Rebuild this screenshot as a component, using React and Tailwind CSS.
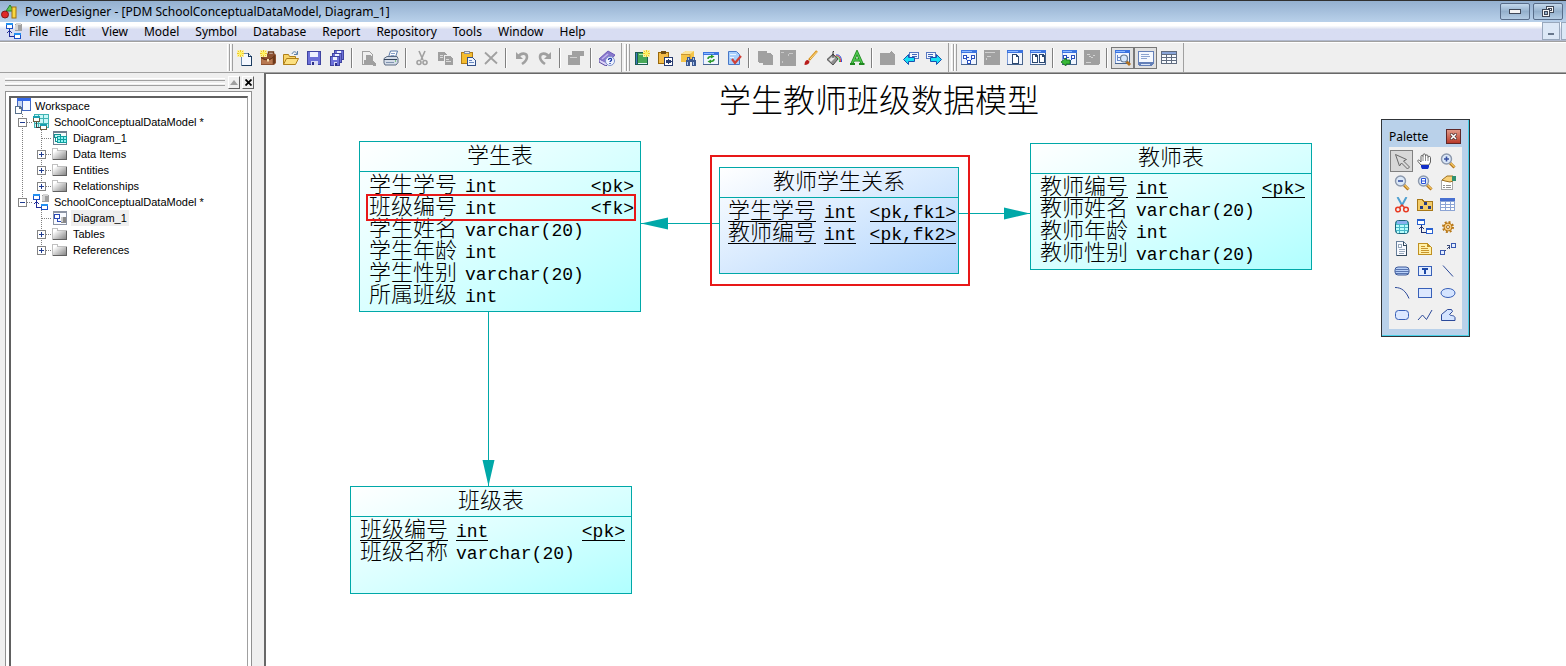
import React from 'react';
import clsx from 'clsx';

const NAVY = '#2c4a9a';
const GRAY = '#a0a0a0';
const TEAL = '#00a8a8';

const Icon = ({ children, size = 16, smooth }) => (
  <svg
    width={size}
    height={size}
    viewBox="0 0 16 16"
    fill="none"
    shapeRendering={smooth ? 'auto' : 'crispEdges'}
    aria-hidden="true"
  >
    {children}
  </svg>
);

/* ---------- shared drawings ---------- */

const Spark = ({ x = 0, y = 0 }) => (
  <g transform={`translate(${x} ${y})`}>
    <path d="M0 0h7v7H0z" fill="#fbf0a0" />
    <path d="M3 0h1v7H3zM0 3h7v1H0zM1 1h1v1H1zM5 1h1v1H5zM1 5h1v1H1zM5 5h1v1H5z" fill="#f0c828" />
    <path d="M2 2h3v3H2z" fill="#fff45c" />
  </g>
);

const Floppy = ({ x = 1, y = 1, s = 13 }) => (
  <g transform={`translate(${x} ${y})`}>
    <rect x="0" y="0" width={s} height={s} fill="#4044a0" />
    <rect x="1" y="1" width={s - 2} height={s - 2} fill="#6c70d8" />
    <rect x="3" y="1" width={s - 6} height={s > 11 ? 5 : 3} fill="#eef2ff" />
    <rect x="4" y={s - 4} width={s - 7} height="4" fill="#d8dcf4" />
    <rect x="5" y={s - 3} width="2" height="3" fill="#2c2f88" />
  </g>
);

const Window = ({ x = 1, y = 1, w = 15, h = 14 }) => (
  <g>
    <rect x={x} y={y} width={w} height={h} fill="#48648c" />
    <rect x={x} y={y} width={w - 1} height={h - 1} fill="#7c9cd8" />
    <rect x={x + 1} y={y + 3} width={w - 2} height={h - 4} fill="#f0f5ff" />
    <rect x={x} y={y} width={w} height="3" fill="#3c74e0" />
    <rect x={x + 1} y={y + 1} width={w - 6} height="1" fill="#8cb8ff" />
  </g>
);

const Lens = ({ children }) => (
  <g shapeRendering="auto">
    <path d="M10 10l4.500 4.500" stroke="#b07018" strokeWidth="3" />
    <path d="M10.500 10l4 4" stroke="#f4c860" strokeWidth="1.200" />
    <circle cx="6.500" cy="6" r="5" fill="#dbe8f8" stroke="#8c98ac" strokeWidth="1.400" />
    {children}
  </g>
);

const PhysicalModel = () => (
  <g>
    <path d="M9 1h7v7H9z" fill="#a0a0a0" />
    <path d="M10 0h5v2h-5zM9 2h3v5H9z" fill="#d4d4d4" />
    <path d="M0 0h7v6H0z" fill="#1c50c8" />
    <path d="M0 0h7v2H0z" fill="#2490f0" />
    <path d="M1 2h5v3H1z" fill="#fff" />
    <path d="M8 10h7v6H8z" fill="#1c50c8" />
    <path d="M8 10h7v2H8z" fill="#2490f0" />
    <path d="M9 12h5v3H9z" fill="#fff" />
    <path d="M3 6h1v7h4v1H3zM2 8h3v1H2zM1 9h1v1H1zM5 9h1v1H5z" fill="#202c98" />
  </g>
);

const Flow = () => (
  <g>
    <path d="M2 5h4v4H2zM10 5h4v4h-4zM6 10h4v4H6z" fill="#2850c0" />
    <path d="M3 6h2v2H3zM11 6h2v2h-2zM7 11h2v2H7z" fill="#fff" />
    <path d="M5 9h1v1H5zM10 9h1v1h-1zM6 7h2v1H6z" fill="#2850c0" />
  </g>
);

const Arrow = ({ flip }) => (
  <g transform={flip ? 'translate(16 0) scale(-1 1)' : undefined}>
    <path d="M6 2h10v7H6z" fill="#5878c0" />
    <path d="M7 3h8v5H7z" fill="#f4f8ff" />
    <path d="M9 4h5v1H9zM9 6h5v1H9z" fill="#4468b8" />
    <path d="M.5 9.500l5-5v3h6v4h-6v3z" fill="#18e0f4" stroke="#1850b0" shapeRendering="auto" />
  </g>
);

/* ---------- toolbar icons ---------- */

const icons = {
  new: (
    <g>
      <path d="M4.500 3.500h7l3 3v9h-10z" fill="#f4f8ff" stroke="#6c88a8" />
      <path d="M14.500 6v9.500H5" stroke="#1c3c60" />
      <path d="M11.500 3v3.500h3" stroke="#1c3c60" />
      <Spark />
    </g>
  ),
  project: (
    <g shapeRendering="auto">
      <path d="M8.500 4V2h5v2" stroke="#6c3818" strokeWidth="1.400" />
      <path d="M1 5l2-1.500h12L16 5v8l-2 2H1z" fill="#8c5030" />
      <path d="M1.500 8c4 3 8 3 11 0v6h-11z" fill="#b87850" />
      <path d="M1 7.500c4 3 8 3 12 0" stroke="#5c2c10" />
      <path d="M13 6l2-1v8l-2 1z" fill="#6c3818" />
      <path d="M7 9h2v2.500H7z" fill="#f8e0b0" />
      <Spark />
    </g>
  ),
  open: (
    <g shapeRendering="auto">
      <path d="M.5 14.500V4.500h5l1 2h6v3" fill="#f8d468" stroke="#b08018" />
      <path d="M.5 14.500l3-6h12l-3 6z" fill="#fce080" stroke="#b08018" />
      <path d="M9 4c1-3 4-3 5 0M14.500 1v3.500H11" stroke="#5c80a8" />
    </g>
  ),
  save: <Floppy x={1} y={1} s={14} />,
  saveAll: (
    <g>
      <Floppy x={5} y={0} s={10} />
      <Floppy x={3} y={3} s={10} />
      <Floppy x={1} y={6} s={10} />
    </g>
  ),
  preview: (
    <g fill={GRAY}>
      <path d="M2.500 1.500h7l3 3v10h-10z" stroke={GRAY} fill="none" />
      <path d="M6 5h5l2 3v3l3 3v2h-3l-2-2H4v-4h2z" />
    </g>
  ),
  print: (
    <g shapeRendering="auto">
      <path d="M5.500 7l2-6h7l-2 6z" fill="#fff" stroke="#5878a8" />
      <path d="M8 3.500h4M7.500 5.500h4" stroke="#88a0c8" />
      <path d="M1 8.500l3-2h10l1 2v4l-2 2.500H2l-1-2z" fill="#d4dce8" stroke="#5c6c84" />
      <path d="M1 9.500h13" stroke="#34445c" />
      <path d="M3 12.500h8" stroke="#8094b0" />
      <path d="M12 11h1" stroke="#30b030" />
    </g>
  ),
  cut: (
    <g stroke={GRAY} strokeWidth="1.600" shapeRendering="auto">
      <path d="M5 1l4 9M11 1L7 10" />
      <circle cx="5" cy="12.500" r="2" />
      <circle cx="11" cy="12.500" r="2" />
    </g>
  ),
  copy: (
    <g fill={GRAY}>
      <path d="M1 2h6l3 2v7H1z" />
      <path d="M7 5h6l3 3v7H7z" stroke="#efefef" strokeWidth="1" />
      <path d="M9 9h3v1H9zM9 11h5v1H9zM3 5h3v1H3zM3 7h3v1H3z" fill="#dcdcdc" />
    </g>
  ),
  paste: (
    <g>
      <path d="M1.500 2.500h11v11h-11z" fill="#f4bc30" stroke="#b07c18" />
      <path d="M4 1h6v3H4z" fill="#8890a0" />
      <path d="M5 2h4v1H5z" fill="#e8ecf4" />
      <path d="M7.500 7.500h5l3 3v5h-8z" fill="#eef4ff" stroke="#345088" />
      <path d="M9 10.500h3M9 12.500h5" stroke="#6888c0" />
    </g>
  ),
  remove: (
    <path d="M2 2.500l12 11M14 2L2 14" stroke={GRAY} strokeWidth="1.800" shapeRendering="auto" />
  ),
  undo: (
    <g shapeRendering="auto">
      <path d="M4 7c3-5 9-4 9 0 0 3-2 5-5 7" stroke={GRAY} strokeWidth="2.600" />
      <path d="M2 2v7h7z" fill={GRAY} />
    </g>
  ),
  redo: (
    <g shapeRendering="auto">
      <path d="M12 7C9 2 3 3 3 7c0 3 2 5 5 7" stroke={GRAY} strokeWidth="2.600" />
      <path d="M14 2v7H7z" fill={GRAY} />
    </g>
  ),
  props: (
    <g fill={GRAY}>
      <path d="M4 1h12v5h-4v9H0V5h4z" />
      <path d="M2 7h7v1H2z" fill="#d0d0d0" />
    </g>
  ),
  help: (
    <g shapeRendering="auto">
      <path d="M0 9l9-8 7 4-8 9z" fill="#8878cc" stroke="#6c5cb8" />
      <path d="M0 9.500V12l7 4 2-2" fill="#dcd4f8" stroke="#5848a0" />
      <path d="M3 9l6-5" stroke="#c0b4f0" strokeWidth="1.500" />
      <circle cx="11" cy="11" r="4.500" fill="#f0f4ff" stroke="#7c90cc" />
      <path d="M9.500 10c0-2.500 3.500-2 3 0-.3 1-1.500 1-1.500 2M11 13v1" stroke="#1838a8" strokeWidth="1.300" />
    </g>
  ),
  newModel: (
    <g>
      <path d="M1 2h13v13H1z" fill="#1c5c50" />
      <path d="M4 3h9v10H4z" fill="#48a858" />
      <path d="M2 3h1v11H2z" fill="#3c78c0" />
      <path d="M5 4h6v1H5z" fill="#b0e4b0" />
      <path d="M4 13h9v1H4z" fill="#e4f4f8" />
      <Spark x={9} />
    </g>
  ),
  pasteShortcut: (
    <g>
      <path d="M1.500 2.500h10v11h-10z" fill="#f4bc48" stroke="#98680c" />
      <path d="M4 1h5v3H4z" fill="#704c10" />
      <path d="M7 7h9v9H7z" fill="#283c70" />
      <path d="M8 8h7v7H8z" fill="#fff" />
      <path d="M9 13v-3h2V8.500l4 3-4 3V13z" fill="#283c70" />
    </g>
  ),
  find: (
    <g>
      <path d="M1 4l5-3h8v7l-4 4H1z" fill="#f4c448" shapeRendering="auto" />
      <path d="M1 4l5-3h8l-4 3z" fill="#fce498" shapeRendering="auto" />
      <path d="M1 4.500h9V12" stroke="#c89430" shapeRendering="auto" />
      <path d="M7 7h3v2h2V7h3v2l1 2v5h-4v-4h-2v4H6v-5l1-2z" fill="#3c5890" />
      <path d="M7 12h1v3H7zM13 12h1v3h-1zM8 8h1v2H8zM13 8h1v2h-1z" fill="#a8c8f4" />
    </g>
  ),
  refresh: (
    <g>
      <Window x={0} y={2} w={16} h={13} />
      <g shapeRendering="auto">
        <path d="M5 9c0-2 1.500-2.500 4-2.500M11 9c0 2-1.500 2.500-4 2.500" stroke="#2c9c2c" strokeWidth="1.600" />
        <path d="M8 4.500l3.500 2-3.500 2zM8 9.500l-3.500 2 3.500 2z" fill="#2c9c2c" />
      </g>
    </g>
  ),
  check: (
    <g shapeRendering="auto">
      <path d="M2.500 1.500h8l3 3v10h-11z" fill="#a8d0fc" stroke="#4878c8" />
      <path d="M4 4.500h6M4 7.500h4" stroke="#e8f4ff" />
      <path d="M6 9l3 4 6-7" stroke="#d04038" strokeWidth="2.200" />
    </g>
  ),
  shapesA: <path d="M1 1h9v2h3l3 3v8l-1 1H6v-2H2l-1-1z" fill={GRAY} />,
  shapesB: (
    <g>
      <path d="M0 0h16v16H0z" fill={GRAY} />
      <path d="M1 2h3v1H1zM9 3h4v1H9zM2 11h1v2H2zM8 4h1v2H8z" fill="#c8c8c8" />
    </g>
  ),
  brush: (
    <g shapeRendering="auto">
      <path d="M6 10L14 1" stroke="#d89018" strokeWidth="2.400" />
      <path d="M7 9l7-7.500" stroke="#fce090" />
      <path d="M1.500 15c0-3 1-5 3.500-5l1.500 1.500c0 2-2 3.500-5 3.500z" fill="#b81c1c" />
    </g>
  ),
  fill: (
    <g shapeRendering="auto">
      <path d="M1 9.500L7 4l5 5-5 6z" fill="#909090" stroke="#505050" />
      <path d="M3 9.500L7 6l2 2-4 4z" fill="#e8e8e8" />
      <path d="M7 8V1.500h1" stroke="#303030" />
      <path d="M10 5c3-.5 5.500 1 5.500 7" stroke="#2848d8" />
      <path d="M9.500 6c3-.5 5 1 5 6" stroke="#e03020" />
      <path d="M10 7c2-.5 3.500 1 3.500 5" stroke="#20b040" />
    </g>
  ),
  font: (
    <g shapeRendering="auto">
      <path d="M3 13.500L8 2.500l5 11M4.500 10h6" stroke="#208820" strokeWidth="3" />
      <path d="M3 13.500L8 2.500l5 11M4.500 10h6" stroke="#50c850" strokeWidth="1.400" />
      <path d="M1 14h5M10 14h5.500" stroke="#208820" strokeWidth="2" />
    </g>
  ),
  grayFolder: <path d="M0 3h9l2-2 4 3v11H0z" fill={GRAY} />,
  back: <Arrow />,
  forward: <Arrow flip />,
  diagram: (
    <g>
      <Window x={0} y={0} w={16} h={15} />
      <Flow />
    </g>
  ),
  grayWin: (
    <g>
      <path d="M0 0h16v15H0z" fill={GRAY} />
      <path d="M1 2h10v1H1zM3 6h4v1H3zM2 8h1v2H2z" fill="#d0d0d0" />
    </g>
  ),
  page: (
    <g>
      <Window x={0} y={0} w={16} h={15} />
      <path d="M5 4h4l3 2v8H5z" fill="#2c4870" />
      <path d="M6 5h3v2h2v6H6z" fill="#fff" />
    </g>
  ),
  pages: (
    <g>
      <Window x={0} y={0} w={16} h={15} />
      <path d="M2 4h4l2 2v7H2zM9 4h4l2 2v7H9z" fill="#2c4870" />
      <path d="M3 5h2v2h2v5H3zM10 5h2v2h2v5h-4z" fill="#fff" />
    </g>
  ),
  importDiagram: (
    <g>
      <Window x={1} y={0} h={15} />
      <Flow />
      <path d="M0 12l5-4v2h4v4H5v2z" fill="#38b838" stroke="#187018" strokeWidth=".8" shapeRendering="auto" />
    </g>
  ),
  grayExport: (
    <g>
      <path d="M0 0h16v14l-2 1H0z" fill={GRAY} />
      <path d="M3 4h3v1H3zM5 6h2v1H5zM9 5h2v1H9zM7 7h2v1H7zM2 12h5v1H2z" fill="#d4d4d4" />
    </g>
  ),
  browser: (
    <g>
      <Window x={0} y={0} w={15} h={14} />
      <path d="M2 5h1v6H2zM3 7h2v1H3zM3 10h2v1H3z" fill="#6888c8" />
      <g shapeRendering="auto">
        <path d="M11 11l4 4" stroke="#b07020" strokeWidth="2.800" />
        <circle cx="9" cy="8.500" r="3.500" fill="#d8e8fc" stroke="#687c94" strokeWidth="1.200" />
      </g>
    </g>
  ),
  output: (
    <g>
      <path d="M0 1h16v12l-3 3H1l-1-1z" fill="#6480b8" />
      <path d="M1 2h14v10H1z" fill="#f4f8ff" />
      <path d="M3 4h8v1H3zM3 6h9v1H3zM3 8h6v1H3z" fill="#8ca4d0" />
      <path d="M3 14h9v1H3z" fill="#d8e4f8" />
    </g>
  ),
  list: (
    <g>
      <path d="M0 1h16v13H0z" fill="#606c80" />
      <path d="M1 2h14v2H1z" fill="#88a4d8" />
      <path d="M1 5h4v2H1zM6 5h4v2H6zM11 5h4v2h-4zM1 8h4v2H1zM6 8h4v2H6zM11 8h4v2h-4zM1 11h4v2H1zM6 11h4v2H6zM11 11h4v2h-4z" fill="#f8fbff" />
    </g>
  ),
};

/* ---------- palette icons ---------- */

const paletteTools = [
  ['Pointer', <path d="M1.500 1.500l11 5-3 1.500 6 6-2 2-6-6-2 3z" fill="#d8d8d8" stroke="#686868" shapeRendering="auto" />],
  ['Grabber', (
    <g shapeRendering="auto">
      <path d="M4 12L1 8.500C.2 7.300 1.500 6.500 2.500 7.500L4 9V3.500c0-1.500 2-1.500 2 0V2c0-1.500 2.500-1.500 2.500 0v1c0-1.500 2.500-1.500 2.500 0v1.500c0-1.500 2.500-1.500 2.500 0V9L12 12z" fill="#fff" stroke="#606060" />
      <path d="M6 3.500V8M8.500 3v5M11 4.500V8" stroke="#808080" strokeWidth=".9" />
      <path d="M4 12h8v2l-1 2H5l-1-2z" fill="#1430c8" />
    </g>
  )],
  ['Zoom In', <Lens><path d="M4 6h5M6.500 3.500v5" stroke="#3850a0" strokeWidth="1.600" /></Lens>],
  ['Zoom Out', <Lens><path d="M4 6h5" stroke="#3850a0" strokeWidth="1.600" /></Lens>],
  ['Open Diagram', <Lens><path d="M4.500 3.500h4v5h-4zM4.500 6h4" fill="#fff" stroke="#2850d8" /></Lens>],
  ['Properties', (
    <g>
      <path d="M1.500 5.500h11v9h-11z" fill="#fff" stroke="#a8a8a8" />
      <path d="M3 10h2v1H3zM6 10h5v1H6zM3 12h2v1H3zM6 12h5v1H6z" fill="#909090" />
      <path d="M2 5l5-4h6v5l-3 1-5-1z" fill="#f8d078" stroke="#9c7020" shapeRendering="auto" />
      <path d="M12 1h4v5h-4z" fill="#309070" />
    </g>
  )],
  ['Delete', (
    <g shapeRendering="auto">
      <path d="M3.500 0l5 9M12.500 0l-5 9" stroke="#50a0d0" strokeWidth="2" />
      <circle cx="4" cy="12.500" r="2.300" stroke="#e83820" strokeWidth="1.500" />
      <circle cx="12" cy="12.500" r="2.300" stroke="#e83820" strokeWidth="1.500" />
      <path d="M5.500 10.500L8 8l2.500 2.500" stroke="#e83820" strokeWidth="1.500" />
    </g>
  )],
  ['Package', (
    <g>
      <path d="M0 14V2h6l1 2h9v10z" fill="#a87818" />
      <path d="M1 13V3h4l1 2h9v8z" fill="#f4cc68" />
      <path d="M7 5h3v3H7zM3 9h3v3H3zM11 9h3v3h-3z" fill="#283c80" />
    </g>
  )],
  ['Table', (
    <g>
      <path d="M0 1h15v13H0z" fill="#8ca4d4" />
      <path d="M0 1h15v3H0z" fill="#4870d0" />
      <path d="M1 5h4v2H1zM6 5h4v2H6zM11 5h3v2h-3zM1 8h4v2H1zM6 8h4v2H6zM11 8h3v2h-3zM1 11h4v2H1zM6 11h4v2H6zM11 11h3v2h-3z" fill="#fff" />
    </g>
  )],
  ['View', (
    <g>
      <rect x="1.500" y="1.500" width="13" height="13" rx="3" fill="#48b8c8" stroke="#186078" shapeRendering="auto" />
      <path d="M3 2h10v3H3z" fill="#88b0f0" />
      <path d="M2 6h3v2H2zM6 6h4v2H6zM11 6h3v2h-3zM2 9h3v2H2zM6 9h4v2H6zM11 9h3v2h-3zM3 12h2v2H3zM6 12h4v2H6zM11 12h2v2h-2z" fill="#b8fcfc" />
    </g>
  )],
  ['Reference', (
    <g>
      <path d="M0 0h8v6H0zM9 9h7v6H9z" fill="#2860d0" />
      <path d="M1 2h6v3H1zM10 11h5v3h-5z" fill="#fff" />
      <path d="M4 6h1v7h4v1H4zM3 8h3v1H3zM2 9h1v1H2zM6 9h1v1H6z" fill="#203070" />
    </g>
  )],
  ['Procedure', (
    <g shapeRendering="auto">
      <circle cx="8" cy="8" r="5" stroke="#b87818" strokeWidth="2" strokeDasharray="2 1.920" />
      <circle cx="8" cy="8" r="4" fill="#f8cc80" stroke="#b87818" />
      <circle cx="8" cy="8" r="1.500" fill="#fff" stroke="#a87020" />
    </g>
  )],
  ['File', (
    <g>
      <path d="M2.500.5h7l3 3v11h-10z" fill="#f8faff" stroke="#68809c" />
      <path d="M12.500 4v10.500H3M9.500 1v3h3" stroke="#34485c" />
      <path d="M4 3h4v4H4zM5 8h6v1H5zM5 10h6v1H5zM5 12h5v1H5z" fill="#98a8bc" />
      <path d="M5 4h2v2H5z" fill="#fff" />
    </g>
  )],
  ['Note', (
    <g>
      <path d="M1 2h9l5 4v8H1z" fill="#c09020" />
      <path d="M2 3h8v3h4v7H2z" fill="#fff0a8" />
      <path d="M4 5h4v1H4zM4 7h7v1H4zM4 9h8v1H4zM4 11h8v1H4z" fill="#c8942c" />
    </g>
  )],
  ['Link', (
    <g>
      <path d="M0 9h5v5H0zM11 2h5v5h-5z" fill="#3858b0" />
      <path d="M1 10h3v3H1zM12 3h3v3h-3z" fill="#e4eeff" />
      <path d="M5 9h1v1H5zM7 7h1v1H7zM8 6h1v1H8zM9 5h1v1H9zM7 4h3v1H7zM9 4h1v4H9z" fill="#384878" />
    </g>
  )],
  ['Title', (
    <g shapeRendering="auto">
      <rect x="1" y="4" width="14" height="8" rx="3" fill="#b8d0f8" stroke="#3c5898" />
      <path d="M1.500 6.500h13M1 8.500h14M1.500 10.500h13" stroke="#5874b0" />
    </g>
  )],
  ['Text', (
    <g>
      <path d="M1 3h14v10H1z" fill="#3860b8" />
      <path d="M2 4h12v8H2z" fill="#e4eeff" />
      <path d="M5 5h6v2H5zM7 7h2v4H7z" fill="#1c48a8" />
    </g>
  )],
  ['Line', <path d="M3 2.500l10 11" stroke={NAVY} shapeRendering="auto" />],
  ['Arc', <path d="M1 2.500c7 0 11 4 14 11" stroke={NAVY} shapeRendering="auto" />],
  ['Rectangle', <path d="M1.500 3.500h13v9h-13z" fill="#dce8ff" stroke="#3860b8" />],
  ['Ellipse', <ellipse cx="8" cy="8" rx="7" ry="4.500" fill="#d4e4ff" stroke="#3860b8" shapeRendering="auto" />],
  ['Rounded Rectangle', <rect x="1.500" y="3.500" width="13" height="9" rx="3" fill="#dce8ff" stroke="#3860b8" shapeRendering="auto" />],
  ['Polyline', <path d="M1 13l4.500-5 4 4.500L15 3" stroke={NAVY} shapeRendering="auto" />],
  ['Polygon', <path d="M1.500 13.500v-6l6-5h4l1 2-3 3c2 2 4 0 5.500 3v3z" fill="#d4e4ff" stroke={NAVY} shapeRendering="auto" />],
];

const toolbars = [
  [
    ['new', 'project', 'open', 'save', 'saveAll'],
    ['preview', 'print'],
    ['cut', 'copy', 'paste', 'remove'],
    ['undo', 'redo'],
    ['props'],
    ['help'],
  ],
  [
    ['newModel', 'pasteShortcut', 'find', 'refresh', 'check'],
    ['shapesA', 'shapesB', 'brush', 'fill', 'font'],
    ['grayFolder', 'back', 'forward'],
  ],
  [
    ['diagram', 'grayWin', 'page', 'pages'],
    ['importDiagram', 'grayExport'],
    ['browser', 'output', 'list'],
  ],
];

const pressed = ['browser', 'output'];

const Toolbar = ({ groups }) => (
  <div className="flex h-full items-center border-r border-[#a0a0a0] pr-[3px]" role="toolbar">
    <div className="flex h-full w-[6px] py-px">
      <div className="w-[3px] border-l border-r border-l-white border-r-[#a0a0a0]" />
      <div className="w-[3px] border-l border-r border-l-white border-r-[#a0a0a0]" />
    </div>
    {groups.map((group, i) => (
      <React.Fragment key={i}>
        {i > 0 && (
          <div className="flex h-5 w-2 justify-center">
            <div className="w-[2px] border-l border-r border-l-[#808080] border-r-white" />
          </div>
        )}
        {group.map((name) => (
          <button
            key={name}
            type="button"
            aria-label={name}
            className={clsx(
              'flex h-[22px] w-[23px] items-center justify-center border',
              pressed.includes(name) ? 'border-[#787878] bg-[#e0e0e0]' : 'border-transparent'
            )}
          >
            <Icon>{icons[name]}</Icon>
          </button>
        ))}
      </React.Fragment>
    ))}
  </div>
);

/* ---------- object browser ---------- */

const FolderIcon = () => (
  <Icon>
    <defs>
      <linearGradient id="folder" x1="0" y1="0" x2="1" y2="1">
        <stop offset="0.2" stopColor="#fff" />
        <stop offset="1" stopColor="#808080" />
      </linearGradient>
    </defs>
    <path d="M.5 13.500v-11h5v2h9v9z" fill="url(#folder)" stroke="#c0c0c0" />
    <path d="M14.500 5v8.500H1" stroke="#606060" />
  </Icon>
);

const treeIcons = {
  workspace: (
    <Icon>
      <path d="M2 0h14v13H2z" fill="#4468c0" />
      <path d="M2 0h14v3H2z" fill="#3468e8" />
      <path d="M3 3h4v9H3z" fill="#c8d8f4" />
      <path d="M8 3h7v9H8z" fill="#f4f8ff" />
      <path d="M0 8h5l2 2v6H0z" fill="#58708c" />
      <path d="M1 9h3v2h2v4H1z" fill="#fff" />
    </Icon>
  ),
  cdm: (
    <Icon>
      <path d="M1 0h15v14H1z" fill="#40b4b4" />
      <path d="M2 1h3v3H2zM6 1h4v3H6zM11 1h4v3h-4zM2 5h3v4H2zM6 5h4v4H6zM11 5h4v4h-4zM2 10h3v3H2zM6 10h4v3H6zM11 10h4v3h-4z" fill="#c8f8f8" />
      <path d="M0 2h7v6H0zM7 10h7v6H7z" fill="#686040" />
      <path d="M1 4h5v3H1zM8 12h5v3H8z" fill="#fff" />
      <path d="M0 2h7v2H0zM7 10h7v2H7z" fill="#18a0b0" />
      <path d="M3 8h1v5h3v1H3z" fill="#404040" />
    </Icon>
  ),
  cdmDiagram: (
    <Icon>
      <path d="M1 1h14v14H1z" fill="#708090" />
      <path d="M2 3h12v11H2z" fill="#f4fcfc" />
      <path d="M2 4h7v4H2zM3 8h1v3h2v1H3z" fill="#109090" />
      <path d="M3 5h5v2H3z" fill="#c0f4f4" />
      <path d="M5 6h10v7H5z" fill="#10a0a0" />
      <path d="M6 7h2v2H6zM9 7h2v2H9zM12 7h2v2h-2zM6 10h2v2H6zM9 10h2v2H9zM12 10h2v2h-2z" fill="#90f4f4" />
    </Icon>
  ),
  pdm: (
    <Icon>
      <PhysicalModel />
    </Icon>
  ),
  pdmDiagram: (
    <Icon>
      <path d="M1 1h14v14H1z" fill="#8c94a4" />
      <path d="M2 3h12v11H2z" fill="#f8faff" />
      <path d="M2 4h6v5H2zM5 9h1v2h3v1H5z" fill="#2848b8" />
      <path d="M3 5h4v3H3z" fill="#fff" />
      <path d="M9 7h5v6H9z" fill="#888" />
      <path d="M9 7h2v5H9z" fill="#c8c8c8" />
    </Icon>
  ),
  folder: <FolderIcon />,
};

const nodes = [
  { label: 'SchoolConceptualDataModel *', icon: 'cdm', cells: ['minus'] },
  { label: 'Diagram_1', icon: 'cdmDiagram', cells: ['line', 'tee'] },
  { label: 'Data Items', icon: 'folder', cells: ['line', 'plus'] },
  { label: 'Entities', icon: 'folder', cells: ['line', 'plus'] },
  { label: 'Relationships', icon: 'folder', cells: ['line', 'plusEnd'] },
  { label: 'SchoolConceptualDataModel *', icon: 'pdm', cells: ['minusEnd'] },
  { label: 'Diagram_1', icon: 'pdmDiagram', cells: ['none', 'tee'], selected: true },
  { label: 'Tables', icon: 'folder', cells: ['none', 'plus'] },
  { label: 'References', icon: 'folder', cells: ['none', 'plusEnd'] },
];

const TreeCell = ({ kind }) => {
  const box = kind.startsWith('plus') || kind.startsWith('minus');
  const svg = (
    <svg width="19" height="16" viewBox="0 0 19 16" fill="none" shapeRendering="crispEdges" aria-hidden="true">
      {kind !== 'none' && (
        <path d={kind.endsWith('End') ? 'M9.500 0v8' : 'M9.500 0v16'} stroke="#808080" strokeDasharray="1 1" />
      )}
      {kind !== 'none' && kind !== 'line' && <path d="M10 8.500h9" stroke="#808080" strokeDasharray="1 1" />}
      {box && <rect x="5.500" y="4.500" width="8" height="8" fill="#fff" stroke="#848484" />}
      {box && <path d="M7 8.500h5" stroke="#203c90" />}
      {kind.startsWith('plus') && <path d="M9.500 6v5" stroke="#203c90" />}
    </svg>
  );
  return box ? <button type="button" aria-label="Toggle">{svg}</button> : svg;
};

const ObjectBrowser = () => (
  <aside className="flex w-[264px] shrink-0 flex-col bg-[#efefef] pr-[12px] pl-[5px]">
    <div className="flex h-[18px] items-center gap-[2px]">
      <div className="mr-px flex flex-1 flex-col gap-[2px]">
        <div className="h-[3px] border-t border-b border-t-white border-b-[#a0a0a0]" />
        <div className="h-[3px] border-t border-b border-t-white border-b-[#a0a0a0]" />
      </div>
      <button type="button" aria-label="Collapse" className="flex h-[13px] w-3 items-center justify-center border border-t-white border-r-[#606060] border-b-[#606060] border-l-white">
        <svg width="8" height="5" viewBox="0 0 8 5" aria-hidden="true"><path d="M4 0l4 5H0z" fill={GRAY} /></svg>
      </button>
      <button type="button" aria-label="Close browser" className="-mr-[2px] flex h-[13px] w-3 items-center justify-center border border-t-white border-r-[#606060] border-b-[#606060] border-l-white">
        <svg width="7" height="7" viewBox="0 0 7 7" aria-hidden="true"><path d="M.5.5l6 6M6.500.5l-6 6" stroke="#000" strokeWidth="1.800" /></svg>
      </button>
    </div>
    <div className="flex flex-1 flex-col border border-b-0 border-[#909090] bg-white pt-[4px] pr-[3px] pl-[3px]">
      <div className="flex-1 border border-b-0 border-t-2 border-l-2 border-t-[#606060] border-r-[#a0a0a0] border-l-[#606060] bg-white pl-[2px] font-['Liberation_Sans',Arial,sans-serif] text-[11px] leading-4 text-black">
        <div className="flex h-4 items-center gap-1 pl-[2px]">
          {treeIcons.workspace}
          <span>Workspace</span>
        </div>
        <ul>
          {nodes.map((node, i) => (
            <li key={i} className="flex h-4 items-center">
              {node.cells.map((kind, j) => (
                <TreeCell key={j} kind={kind} />
              ))}
              <span className="pl-px">{treeIcons[node.icon]}</span>
              <span className={clsx('ml-[3px] px-[2px]', node.selected && 'bg-[#efefef]')}>{node.label}</span>
            </li>
          ))}
        </ul>
      </div>
    </div>
  </aside>
);

/* ---------- diagram ---------- */

const entities = [
  {
    title: '学生表',
    box: 'left-[93px] top-[67px] w-[282px] h-[171px] from-white to-[#b0ffff]',
    pad: 'pr-[6px] pl-[9px]',
    rows: [
      { name: '学生学号', type: 'int', keys: '<pk>' },
      { name: '班级编号', type: 'int', keys: '<fk>' },
      { name: '学生姓名', type: 'varchar(20)' },
      { name: '学生年龄', type: 'int' },
      { name: '学生性别', type: 'varchar(20)' },
      { name: '所属班级', type: 'int' },
    ],
  },
  {
    title: '教师学生关系',
    box: 'left-[453px] top-[93px] w-[240px] h-[107px] from-white to-[#b0d4fc]',
    pad: 'pr-[2px] pl-[8px]',
    rows: [
      { name: '学生学号', type: 'int', keys: '<pk,fk1>', primary: true },
      { name: '教师编号', type: 'int', keys: '<pk,fk2>', primary: true },
    ],
  },
  {
    title: '教师表',
    box: 'left-[764px] top-[69px] w-[282px] h-[127px] from-white to-[#b0ffff]',
    pad: 'pr-[6px] pl-[9px]',
    rows: [
      { name: '教师编号', type: 'int', keys: '<pk>', primary: true },
      { name: '教师姓名', type: 'varchar(20)' },
      { name: '教师年龄', type: 'int' },
      { name: '教师性别', type: 'varchar(20)' },
    ],
  },
  {
    title: '班级表',
    box: 'left-[84px] top-[412px] w-[282px] h-[108px] from-white to-[#b0ffff]',
    pad: 'pr-[6px] pl-[9px]',
    rows: [
      { name: '班级编号', type: 'int', keys: '<pk>', primary: true },
      { name: '班级名称', type: 'varchar(20)' },
    ],
  },
];

const Field = ({ primary, cjk, children }) => (
  <span
    className={clsx(
      'block h-[21px] w-fit border-b whitespace-nowrap',
      cjk ? 'text-[22px] leading-6' : 'text-[18px] leading-6',
      primary ? 'border-black' : 'border-transparent'
    )}
  >
    {children}
  </span>
);

const Entity = ({ title, box, pad, rows }) => (
  <section className={clsx('absolute border border-[#00a8a8] bg-linear-to-br', box)}>
    <h2 className="h-[30px] border-b border-[#00a8a8] text-center text-[22px] leading-8 font-light">{title}</h2>
    <div className={clsx('pt-[3px]', pad)}>
      <table className="w-full border-collapse">
        <tbody>
          {rows.map((row) => (
            <tr key={row.name} className="h-[22px] align-top">
              <td className="w-24 p-0"><Field cjk primary={row.primary}>{row.name}</Field></td>
              <td className="p-0"><Field primary={row.primary}>{row.type}</Field></td>
              <td className="p-0">
                {row.keys && (
                  <div className="flex justify-end"><Field primary={row.primary}>{row.keys}</Field></div>
                )}
              </td>
            </tr>
          ))}
        </tbody>
      </table>
    </div>
  </section>
);

const Links = () => (
  <svg className="absolute top-0 left-0" width="780" height="420" viewBox="0 0 780 420" fill={TEAL} stroke={TEAL} aria-hidden="true">
    <path d="M375 149.500h78M693 139.500h71M222.500 238v174" />
    <path d="M375 149.500l27-6v12zM764 139.500l-26-6v12zM222.500 412l-6-26h12z" stroke="none" />
  </svg>
);

const Palette = () => (
  <div className="absolute top-[45px] left-[1115px] w-[89px] border border-[#303438] bg-[#b9d1ea] p-[7px] pt-0 shadow-[inset_-1px_-1px_0_#48d0e8]">
    <div className="flex h-[27px] items-center justify-between pt-[6px] pr-px">
      <span className="font-['Noto_Sans',sans-serif] text-[12px] leading-4 font-normal">Palette</span>
      <button type="button" aria-label="Close palette" className="flex h-[15px] w-[15px] items-center justify-center border border-[#602828] bg-linear-to-b from-[#e09888] to-[#b83828]">
        <svg width="7" height="7" viewBox="0 0 7 7" aria-hidden="true">
          <path d="M.5.5l6 6M6.500.5l-6 6" stroke="#503030" strokeWidth="3" />
          <path d="M1 1l5 5M6 1L1 6" stroke="#fff" strokeWidth="1.600" />
        </svg>
      </button>
    </div>
    <div className="grid grid-cols-3 bg-[#f0f0f0] pt-[3px] pr-[3px] pb-[3px] pl-px">
      {paletteTools.map(([label, drawing], i) => (
        <button
          key={label}
          type="button"
          aria-label={label}
          className={clsx(
            'flex h-[22px] items-center justify-center border',
            i === 0 ? 'border-[#808080] bg-[#d8d8d8]' : 'border-transparent'
          )}
        >
          <Icon>{drawing}</Icon>
        </button>
      ))}
    </div>
  </div>
);

const menus = ['File', 'Edit', 'View', 'Model', 'Symbol', 'Database', 'Report', 'Repository', 'Tools', 'Window', 'Help'];

const App = () => (
  <div className="flex min-h-screen flex-col overflow-hidden bg-[#efefef] font-['Noto_Sans','Noto_Sans_CJK_SC',sans-serif] text-black">
    <header className="flex h-[22px] items-center border-t border-[#303030] bg-linear-to-b from-[#94b0d0] to-[#b9d1ea] pr-[3px] pl-px">
      <Icon smooth>
        <path d="M5 7l4-6 4 6z" fill="#60c850" stroke="#208030" />
        <rect x="11" y="3" width="4" height="11" fill="#f8d840" stroke="#a07010" />
        <circle cx="4" cy="10.500" r="3.500" fill="#e02828" stroke="#801818" />
      </Icon>
      <h1 className="ml-2 flex-1 text-[12px] leading-4">PowerDesigner - [PDM SchoolConceptualDataModel, Diagram_1]</h1>
      <div className="flex gap-[3px]">
        <button type="button" aria-label="Minimize" className="flex h-[17px] w-[30px] items-center justify-center rounded-[2px] border border-[#586c88] bg-linear-to-b from-[#c4d8ec] via-[#94b0cc] to-[#b4cce4]">
          <svg width="12" height="5" viewBox="0 0 12 5" aria-hidden="true"><rect x=".5" y=".5" width="11" height="4" fill="#f4f4f4" stroke="#404858" /></svg>
        </button>
        <button type="button" aria-label="Restore" className="flex h-[17px] w-[30px] items-center justify-center rounded-[2px] border border-[#586c88] bg-linear-to-b from-[#c4d8ec] via-[#94b0cc] to-[#b4cce4]">
          <svg width="12" height="11" viewBox="0 0 12 11" shapeRendering="crispEdges" aria-hidden="true">
            <path d="M4.500.5h7v6h-7zM6.500 2.500h3v2h-3z" fill="#f4f4f4" stroke="#404858" />
            <path d="M.5 3.500h7v7h-7zM2.500 5.500h3v3h-3z" fill="#f4f4f4" stroke="#404858" />
            <path d="M3 6h2v2H3z" fill="#94b0cc" />
          </svg>
        </button>
      </div>
    </header>

    <nav className="flex h-[19px] items-center border-b border-[#b0b8cc] bg-linear-to-b from-white from-20% via-[#e4e8f4] via-35% to-[#d8ddf2] to-40% pl-[6px]">
      <Icon>
        <PhysicalModel />
      </Icon>
      <div className="-ml-px flex flex-1 pt-[2px]">
        {menus.map((menu) => (
          <button key={menu} type="button" className="px-2 text-[12px] leading-4">{menu}</button>
        ))}
      </div>
      <div className="-mr-[13px] flex gap-px">
        <button type="button" aria-label="Minimize diagram" className="flex h-[18px] w-[18px] items-center justify-center border border-[#98a8bc] bg-[#dce8f6] pt-[6px]">
          <svg width="6" height="2" aria-hidden="true"><rect width="6" height="2" fill="#68788c" /></svg>
        </button>
        <button type="button" aria-label="Restore diagram" className="h-[18px] w-[18px] border border-[#98a8bc] bg-[#dce8f6]" />
      </div>
    </nav>

    <div className="flex h-8 gap-[2px] border-b border-[#a0a0a0] pt-[2px] pl-[227px] shadow-[inset_0_1px_0_#a0a0a0,inset_0_2px_0_#fff]">
      {toolbars.map((groups, i) => (
        <Toolbar key={i} groups={groups} />
      ))}
    </div>

    <div className="flex flex-1">
      <ObjectBrowser />
      <main className="relative flex-1 overflow-hidden border-t border-l-2 border-t-[#686868] border-l-[#686868] bg-white font-['Liberation_Mono','Noto_Sans_CJK_SC',monospace] font-light">
        <h2 className="absolute top-[10px] left-[453px] text-[32px] leading-10 font-light whitespace-nowrap">学生教师班级数据模型</h2>
        {entities.map((entity) => (
          <Entity key={entity.title} {...entity} />
        ))}
        <Links />
        <div className="absolute top-[120px] left-[100px] h-[27px] w-[270px] border-2 border-[#e81818]" />
        <div className="absolute top-[81px] left-[444px] h-[131px] w-[260px] border-2 border-[#e81818]" />
        <Palette />
      </main>
    </div>
  </div>
);

export default App;
